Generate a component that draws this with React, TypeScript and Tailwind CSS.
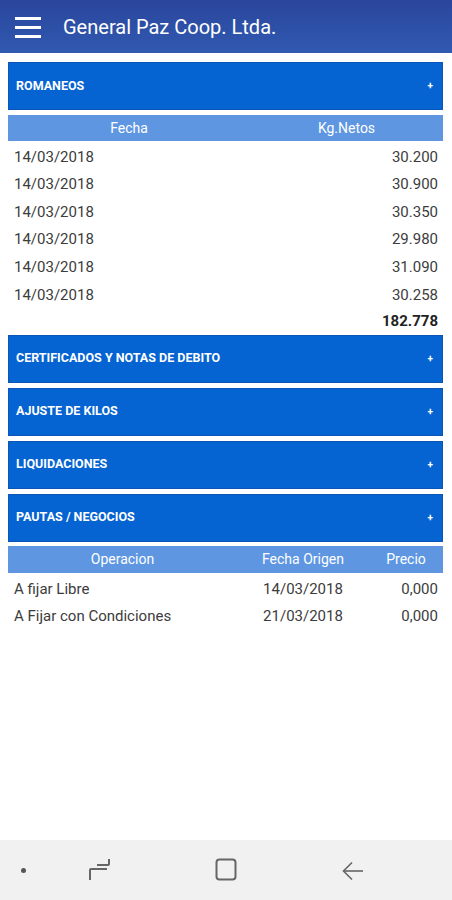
import React from "react";

const romaneos = [
  ["14/03/2018", "30.200"],
  ["14/03/2018", "30.900"],
  ["14/03/2018", "30.350"],
  ["14/03/2018", "29.980"],
  ["14/03/2018", "31.090"],
  ["14/03/2018", "30.258"],
];

function Panel({ title }: { title: string }) {
  return (
    <div className="h-[48px] bg-[#0563d2] border border-[#0a55b5] flex items-center justify-between pl-[7px] pr-[9px]">
      <span className="text-white text-[12.5px] font-bold">{title}</span>
      <span className="text-white text-[10px] font-bold leading-none">+</span>
    </div>
  );
}

export default function App() {
  return (
    <div
      className="w-[452px] h-[900px] bg-white flex flex-col overflow-hidden"
      style={{ fontFamily: "Roboto, 'Liberation Sans', sans-serif" }}
    >
      <div className="h-[53px] bg-gradient-to-b from-[#2a469c] to-[#3159b1] flex items-center shrink-0">
        <div className="ml-[15px] w-[26px] flex flex-col gap-[6px] mt-[2px]">
          <div className="h-[3px] bg-white"></div>
          <div className="h-[3px] bg-white"></div>
          <div className="h-[3px] bg-white"></div>
        </div>
        <span className="ml-[22px] text-white text-[20px] mt-[1px]">General Paz Coop. Ltda.</span>
      </div>

      <div className="px-[8px] pr-[9px] pt-[9px] flex flex-col">
        <Panel title="ROMANEOS" />
        <div className="mt-[5px] h-[26px] bg-[#5e96e2] flex items-center text-white text-[14px]">
          <div className="w-[242px] text-center">Fecha</div>
          <div className="flex-1 text-center">Kg.Netos</div>
        </div>
        <div className="text-[15px] text-[#3c3c3c] pt-[2px]">
          {romaneos.map(([d, v], i) => (
            <div key={i} className="h-[27.6px] flex items-center justify-between pl-[6px] pr-[5px]">
              <span>{d}</span>
              <span>{v}</span>
            </div>
          ))}
          <div className="h-[26px] flex items-center justify-end pr-[5px] font-bold text-[#222]">182.778</div>
        </div>
        <div className="flex flex-col gap-[5px]">
          <Panel title="CERTIFICADOS Y NOTAS DE DEBITO" />
          <Panel title="AJUSTE DE KILOS" />
          <Panel title="LIQUIDACIONES" />
          <Panel title="PAUTAS / NEGOCIOS" />
        </div>
        <div className="mt-[4px] h-[27px] bg-[#5e96e2] flex items-center text-white text-[14px]">
          <div className="w-[229px] text-center">Operacion</div>
          <div className="w-[132px] text-center">Fecha Origen</div>
          <div className="flex-1 text-center">Precio</div>
        </div>
        <div className="text-[15px] text-[#3c3c3c] pt-[3px]">
          <div className="h-[27px] flex items-center">
            <div className="w-[229px] pl-[6px]">A fijar Libre</div>
            <div className="w-[132px] text-center">14/03/2018</div>
            <div className="flex-1 text-right pr-[5px]">0,000</div>
          </div>
          <div className="h-[27px] flex items-center">
            <div className="w-[229px] pl-[6px]">A Fijar con Condiciones</div>
            <div className="w-[132px] text-center">21/03/2018</div>
            <div className="flex-1 text-right pr-[5px]">0,000</div>
          </div>
        </div>
      </div>

      <div className="mt-auto h-[60px] bg-[#f1f1f1] flex items-center relative shrink-0">
        <div className="absolute left-[21px] top-[28px] w-[5px] h-[5px] rounded-full bg-[#555]"></div>
        <svg className="absolute left-[88px] top-[18px]" width="23" height="24" viewBox="0 0 23 24" fill="none" stroke="#666" strokeWidth="2">
          <path d="M21 1 V6 Q21 7 20 7 H9" />
          <path d="M2 22 V12 Q2 11 3 11 H19" />
        </svg>
        <svg className="absolute left-[215px] top-[18px]" width="22" height="23" viewBox="0 0 22 23" fill="none" stroke="#666" strokeWidth="2">
          <rect x="1.5" y="1.5" width="19" height="20" rx="3" />
        </svg>
        <svg className="absolute left-[342px] top-[21px]" width="22" height="20" viewBox="0 0 22 20" fill="none" stroke="#666" strokeWidth="1.6">
          <path d="M21 10 H2" />
          <path d="M10 1.5 L1.5 10 L10 18.5" />
        </svg>
      </div>
    </div>
  );
}
